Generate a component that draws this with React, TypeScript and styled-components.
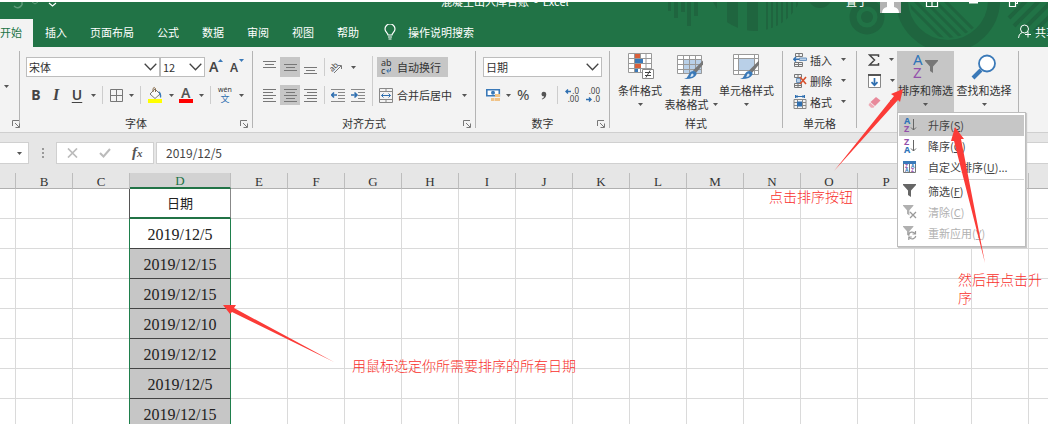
import React from 'react';
import styled, { createGlobalStyle, css } from 'styled-components';

const sans = '"Noto Sans CJK SC", "Noto Sans", sans-serif';
const serif = '"Liberation Serif", "Noto Sans CJK SC", serif';

const Global = createGlobalStyle`
  * { box-sizing: border-box; }
  html, body, #root { margin: 0; height: 100%; }
  body { overflow: hidden; background: #fff; font-family: ${sans}; font-size: 11px; color: #333; }
  button, input, select { font: inherit; color: inherit; margin: 0; padding: 0; border: 0; background: none; }
  button { white-space: nowrap; }
  svg { display: block; flex: none; }
`;

const Page = styled.div`
  position: relative;
  display: flex;
  flex-direction: column;
  height: 100vh;
  padding-top: 2px;
  overflow: hidden;
`;

/* ---------- title bar and tabs ---------- */

const Header = styled.header`
  position: relative;
  flex: none;
  overflow: hidden;
  background: #217346;
  color: #fff;
`;
const Banner = styled.svg`
  position: absolute;
  top: 0;
  right: 0;
`;
const TitleRow = styled.div`
  position: relative;
  display: flex;
  height: 17px;
  align-items: flex-start;
`;
const QuickAccess = styled.div`
  flex: 0 1 441px;
`;
const TitleText = styled.h1`
  margin: -9px 0 0;
  font-size: 11px;
  line-height: 16px;
  font-weight: 400;
  white-space: nowrap;
`;
const WindowTools = styled.div`
  display: flex;
  margin-left: auto;
  margin-right: 30px;
`;
const UserName = styled.span`
  width: 34px;
  margin-top: -9px;
  line-height: 16px;
`;
const TabRow = styled.nav`
  position: relative;
  display: flex;
  height: 28px;
  align-items: stretch;
  gap: 23px;
`;
const Tab = styled.button<{ $active?: boolean }>`
  padding-bottom: 2px;
  color: #fff;
  line-height: 24px;
  ${p => p.$active && css`
    width: 33px;
    margin-right: -11px;
    padding-right: 11px;
    background: #f3f3f3;
    color: #217346;
  `}
`;
const Tell = styled.button`
  display: flex;
  align-items: center;
  gap: 12px;
  margin-left: 2px;
  padding-bottom: 3px;
  color: #fff;
`;
const Share = styled(Tell)`
  gap: 4px;
  margin-left: auto;
  margin-right: -9px;
`;

/* ---------- ribbon ---------- */

const Ribbon = styled.div`
  position: relative;
  z-index: 2;
  display: flex;
  flex: none;
  padding: 4px 0;
  background: #f3f3f3;
  border-bottom: 1px solid #cfcfcf;
`;
const Group = styled.section<{ $w: number }>`
  display: flex;
  flex-direction: column;
  flex: none;
  width: ${p => p.$w}px;
  border-right: 1px solid #b4b4b4;
`;
const Body = styled.div<{ $left?: number }>`
  display: flex;
  height: 67px;
  padding-left: ${p => p.$left ?? 0}px;
`;
const Rows = styled.div`
  display: flex;
  flex-direction: column;
  gap: 8px;
  padding-top: 6px;
`;
const Row = styled.div`
  display: flex;
  height: 20px;
`;
const Footer = styled.footer`
  display: grid;
  grid-template-columns: 12px 1fr 12px;
  height: 10px;
  line-height: 10px;
  text-align: center;
`;
const Launcher = styled.button`
  grid-column: 3;
  align-self: end;
`;
const GroupName = styled.span`
  grid-column: 2;
`;
const Tool = styled.button<{ $w?: number; $on?: boolean }>`
  display: flex;
  align-items: center;
  justify-content: center;
  flex: none;
  width: ${p => p.$w ?? 20}px;
  height: 20px;
  background: ${p => (p.$on ? '#c6c6c6' : 'none')};
`;
const Letter = styled.span<{ $kind?: 'b' | 'i' | 'u' }>`
  font: 700 14px/20px "Noto Sans", sans-serif;
  color: #444;
  ${p => p.$kind === 'i' && css`font-family: "Liberation Serif", serif; font-style: italic; font-size: 16px;`}
  ${p => p.$kind === 'u' && css`font-weight: 600; text-decoration: underline; text-underline-offset: 2px;`}
`;
const CaretBox = styled.button`
  display: flex;
  align-items: center;
  justify-content: center;
  flex: none;
  width: 10px;
`;
const Rule = styled.span<{ $w?: number; $tall?: boolean }>`
  flex: none;
  width: ${p => p.$w ?? 8}px;
  height: ${p => (p.$tall ? 50 : 18)}px;
  margin-top: ${p => (p.$tall ? 5 : 1)}px;
  background: linear-gradient(#cdcdcd, #cdcdcd) center / 1px 100% no-repeat;
`;
const SelectBox = styled.label<{ $w: number }>`
  position: relative;
  width: ${p => p.$w}px;
  height: 20px;
  svg { position: absolute; right: 3px; top: 6px; pointer-events: none; }
  select {
    appearance: none;
    width: 100%;
    height: 20px;
    padding: 0 2px;
    border: 1px solid #bdbdbd;
    border-radius: 0;
    background: #fff;
    line-height: 18px;
  }
`;
const TextTool = styled.button<{ $on?: boolean }>`
  display: flex;
  align-items: center;
  gap: 4px;
  height: 20px;
  padding: 0 7px 0 2px;
  background: ${p => (p.$on ? '#c6c6c6' : 'none')};
`;
const BigTool = styled.button<{ $w: number; $on?: boolean }>`
  display: flex;
  flex-direction: column;
  align-items: center;
  flex: none;
  width: ${p => p.$w}px;
  height: 67px;
  line-height: 14px;
  background: ${p => (p.$on ? '#c6c6c6' : 'none')};
`;
const BigIcon = styled.span`
  display: flex;
  align-items: center;
  height: 32px;
`;
const SecondLine = styled.span`
  display: flex;
  align-items: center;
  justify-content: center;
  gap: 4px;
  height: 14px;
`;
const Stack = styled.div<{ $w?: number }>`
  display: flex;
  flex-direction: column;
  flex: none;
  width: ${p => (p.$w ? p.$w + 'px' : 'auto')};
  margin-top: -2px;
`;
const SmallTool = styled.button`
  display: flex;
  align-items: center;
  gap: 3px;
  height: 21px;
  svg:last-child { margin-left: 6px; }
`;
const Anchor = styled.div`
  position: relative;
`;

/* ---------- sort menu ---------- */

const Menu = styled.div`
  position: absolute;
  top: 61px;
  left: 0;
  width: 129px;
  padding: 2px 1px;
  background: #fff;
  border: 1px solid #bdbdbd;
  box-shadow: 1px 1px 1px #c8c8c8;
`;
const MenuItem = styled.button<{ $on?: boolean; $off?: boolean }>`
  display: flex;
  align-items: center;
  gap: 10px;
  width: 100%;
  height: 21px;
  padding: 0 0 1px 3px;
  background: ${p => (p.$on ? '#c6c6c6' : 'none')};
  color: ${p => (p.$off ? '#b1b1b1' : '#444')};
`;
const MenuRule = styled.hr`
  height: 1px;
  margin: 1px 0 1px 29px;
  border: 0;
  background: #d4d4d4;
`;

/* ---------- formula bar ---------- */

const FormulaRow = styled.div`
  display: flex;
  flex: none;
  padding: 9px 0;
  background: #e6e6e6;
`;
const NameBox = styled.button`
  display: flex;
  align-items: center;
  justify-content: flex-end;
  width: 29px;
  padding-right: 6px;
  background: #fff;
  border: 1px solid #d0d0d0;
  border-left: 0;
`;
const Dots = styled.span`
  display: flex;
  align-items: center;
  justify-content: center;
  width: 27px;
`;
const FxBox = styled.div`
  display: flex;
  align-items: center;
  justify-content: space-around;
  width: 98px;
  margin-right: 2px;
  background: #fff;
  border: 1px solid #d0d0d0;
`;
const Fx = styled.span`
  font: italic 700 15px/19px "Liberation Serif", serif;
  color: #555;
  small { font-size: 11px; }
`;
const FormulaInput = styled.input`
  flex: 1;
  min-width: 0;
  height: 22px;
  padding: 0 9px 2px;
  background: #fff;
  border: 1px solid #d0d0d0;
  border-right: 0;
  font-size: 12px;
  color: #444;
`;

/* ---------- sheet ---------- */

const Sheet = styled.main`
  flex: 1;
  min-height: 0;
  overflow: hidden;
`;
const Grid = styled.table`
  table-layout: fixed;
  width: 1086px;
  border-collapse: separate;
  border-spacing: 0;
  font-family: ${serif};
`;
const Head = styled.th<{ $on?: boolean }>`
  height: 16px;
  padding: 2px 0 0;
  background: ${p => (p.$on ? '#d2d2d2' : '#e6e6e6')};
  border-right: 1px solid #bdbdbd;
  border-bottom: ${p => (p.$on ? '2px solid #217346' : '1px solid #b0b0b0')};
  color: ${p => (p.$on ? '#217346' : '#333')};
  font-size: 13px;
  font-weight: 400;
  line-height: 12px;
`;
const Cell = styled.td<{ $kind?: 'title' | 'active' | 'picked' }>`
  height: 30px;
  padding: 2px 0 0;
  border-right: 1px solid #dadada;
  border-bottom: 1px solid #dadada;
  text-align: center;
  white-space: nowrap;
  font-size: 16px;
  line-height: 24px;
  color: #222;
  ${p => p.$kind === 'title' && css`
    font-size: 13px;
    border-right-color: #888;
    border-bottom: 2px solid #217346;
    box-shadow: -1px 0 #555;
  `}
  ${p => (p.$kind === 'active' || p.$kind === 'picked') && css`
    border-right: 1px solid #1f7f4c;
    border-bottom-color: #444;
    box-shadow: -1px 0 #1f7f4c;
  `}
  ${p => p.$kind === 'picked' && css`background: #c6c6c6;`}
`;

/* ---------- tutorial annotations ---------- */

const Arrows = styled.svg`
  position: absolute;
  top: 0;
  left: 0;
  z-index: 3;
  pointer-events: none;
`;
const Note = styled.p<{ $x: number; $y: number; $w?: number }>`
  position: absolute;
  z-index: 3;
  left: ${p => p.$x}px;
  top: ${p => p.$y}px;
  width: ${p => (p.$w ? p.$w + 'px' : 'max-content')};
  margin: 0;
  font-size: 14px;
  font-weight: 300;
  line-height: 18px;
  color: #f8302c;
`;

/* ---------- icons ---------- */

const Caret = () => (
  <svg width="5" height="3"><path d="M0 0h5L2.5 3z" fill="#555" /></svg>
);
const Chevron = () => (
  <svg width="13" height="8" fill="none" stroke="#444" strokeWidth="1.3"><path d="M.7.8l5.8 6 5.8-6" /></svg>
);
const LaunchIcon = () => (
  <svg width="8" height="8" fill="none" stroke="#777"><path d="M.5 6V.5H7M3 3l4 4M7.500 3.500v4h-4" /></svg>
);
const Lines = ({ rows, h = 14 }: { rows: [number, number, number][]; h?: number }) => (
  <svg width="13" height={h} stroke="#777">
    {rows.map(([x1, x2, y]) => <path key={y} d={`M${x1} ${y}.5H${x2}`} />)}
  </svg>
);
const full = (a: number, b: number): [number, number, number][] =>
  [1, 4, 7, 10, 13].map((y, i) => (i % 2 ? [a, b, y] : [0, 13, y]));

const GrowA = ({ up }: { up?: boolean }) => (
  <svg width="16" height="18">
    <text x="1" y="14" fontFamily="Noto Sans" fontWeight="600" fontSize={up ? 14 : 12} fill="#444">A</text>
    <path d={up ? 'M10 4l2.500-3L15 4z' : 'M10 1h5l-2.500 3z'} fill="#3a79b8" />
  </svg>
);
const BorderIcon = () => (
  <svg width="13" height="13" fill="none" stroke="#777"><path d="M.5.5h12v12H.5zM6.500.5v12M.5 6.500h12" /></svg>
);
const FillIcon = () => (
  <svg width="16" height="18">
    <path d="M3 8l5-5 5 5-5 4.500z" fill="#fafafa" stroke="#777" />
    <path d="M6 6V2.500q1-2 2.500 0V6" fill="none" stroke="#8a6d4a" />
    <path d="M11.500 5q3.500 1.500 2.500 7-1.500-1-1.500-4z" fill="#3a79b8" />
    <path d="M1 13h14v4H1z" fill="#ff0" />
  </svg>
);
const FontColorIcon = () => (
  <svg width="16" height="18">
    <text x="3" y="12" fontFamily="Noto Sans" fontWeight="600" fontSize="14" fill="#555">A</text>
    <path d="M1 13h14v4H1z" fill="red" />
  </svg>
);
const PhoneticIcon = () => (
  <svg width="18" height="20">
    <text x="9" y="7" textAnchor="middle" fontFamily="Noto Sans" fontSize="7" fill="#333">wén</text>
    <text x="9" y="17" textAnchor="middle" fontFamily="Noto Sans CJK SC" fontSize="9" fill="#2f6fb0">文</text>
  </svg>
);
const OrientIcon = () => (
  <svg width="16" height="14">
    <text x="0" y="9" fontFamily="Noto Sans" fontSize="8" fill="#444" transform="rotate(-45 5 8)">ab</text>
    <path d="M4 13l7-7M8 5.500h3.500V9" fill="none" stroke="#777" />
  </svg>
);
const IndentIcon = ({ inward }: { inward?: boolean }) => (
  <svg width="14" height="14" fill="none">
    <path d="M0 1.500h14M7 4.500h7M7 7.500h7M7 10.500h7M0 13.500h14" stroke="#888" />
    <path d={inward ? 'M0 7h6M3.500 4.500L6 7 3.500 9.500' : 'M6 7H1M3 4.500L.7 7 3 9.500'} stroke="#2f6fb0" strokeWidth="1.6" />
  </svg>
);
const WrapIcon = () => (
  <svg width="14" height="16">
    <text x="2" y="7" fontFamily="Noto Sans" fontSize="9" fill="#333">ab</text>
    <text x="2" y="15" fontFamily="Noto Sans" fontSize="9" fill="#333">c</text>
    <path d="M11.500 9v3H8M9.500 10.200L7.700 12l1.800 1.800" fill="none" stroke="#2f6fb0" />
  </svg>
);
const MergeIcon = () => (
  <svg width="14" height="15" fill="none" stroke="#888">
    <path d="M.5.5h13v14H.5zM.5 3.500h13M.5 11.500h13M7 .5v3M7 11.500v3" />
    <path d="M2.500 7.500h9M4.500 5.500l-2 2 2 2M9.500 5.500l2 2-2 2" stroke="#2f6fb0" />
  </svg>
);
const MoneyIcon = () => (
  <svg width="15" height="15">
    <path d="M.8 1.800h12.500v6H.8z" fill="#fff" stroke="#3a79b8" strokeWidth="1.600" />
    <circle cx="7" cy="4.800" r="2" fill="#3a79b8" />
    <path d="M9 6h5v3H9zM9 10h5v3H9zM5 10h3.500v3H5z" fill="#f0c388" />
  </svg>
);
const DecimalIcon = ({ less }: { less?: boolean }) => (
  <svg width="16" height="18" fontFamily="Noto Sans" fontSize="8" fill="#444">
    <text x="15" y="8" textAnchor="end">{less ? '.00' : '.0'}</text>
    <text x="15" y="16" textAnchor="end">{less ? '.0' : '.00'}</text>
    <path d={less ? 'M1 13.500h5M4 11.500l2 2-2 2' : 'M7 5.500H2M4 3.500l-2 2 2 2'} fill="none" stroke="#2f6fb0" strokeWidth="1.400" />
  </svg>
);
const CommaIcon = () => (
  <svg width="8" height="9"><path d="M1.500 3a2.300 2.300 0 1 1 4.800.3C6.200 6 4.500 8 2 8.500l-.2-.8C3.300 7.200 4 6.300 4 5.300 2.500 5.500 1.500 4.500 1.500 3z" fill="#555" /></svg>
);
const ConditionalIcon = () => (
  <svg width="28" height="28">
    <path d="M2.500.5h23v19h-23zM2.500 5.500h23M2.500 10.500h23M2.500 15.500h23M8.500.5v19M14.500.5v19M20 .5v19" fill="#fff" stroke="#999" />
    <path d="M9 1h5v4H9zM9 11h6v4H9z" fill="#d9603b" />
    <path d="M9 6h8v4H9zM9 16h3v3H9z" fill="#3a79b8" />
    <path d="M16.500 16.500h11v9h-11z" fill="#fff" stroke="#888" />
    <path d="M19 19.500h6M19 22.500h6M24 17.500l-4 7" stroke="#444" />
  </svg>
);
const Brush = () => (
  <>
    <path d="M26 6.500v4l-7 8.500-3-2.500z" fill="#777" />
    <path d="M16.500 17q3.500.5 3 3.500-2.500 5-12.500 4.500 3.500-1 4.500-4 1.500-4 5-4z" fill="#3a79b8" />
    <path d="M15 19.500q2 .2 1.500 2-1 1.500-3.500 1.500 1.200-1 .8-2z" fill="#d5e5f4" />
  </>
);
const TableStyleIcon = () => (
  <svg width="28" height="27">
    <path d="M.5 1.500h24v18H.5z" fill="#fff" />
    <path d="M7 6h18v14H7z" fill="#b9d0e8" />
    <path d="M.5 1.500h24v18H.5zM.5 5.500h24M.5 10.500h24M.5 15.500h24M6.500 1.500v18M12.500 1.500v18M18.500 1.500v18" fill="none" stroke="#999" />
    <Brush />
  </svg>
);
const CellStyleIcon = () => (
  <svg width="28" height="27">
    <path d="M.5.5h25v20H.5z" fill="#fff" />
    <path d="M6 5h15v11H6z" fill="#b9d0e8" />
    <path d="M.5.5h25v20H.5zM.5 4.500h25M.5 16.500h25M5.500.5v20M21.500.5v20" fill="none" stroke="#999" />
    <Brush />
  </svg>
);
const InsertIcon = () => (
  <svg width="14" height="14" fill="none" stroke="#777">
    <path d="M2.500.5h7v3h-7zM6 .5v3M1.500 9.500h8v4h-8zM5.500 9.500v4M1.500 11.500h8" />
    <path d="M6.500 5h7v2.500h-7z" fill="#b9d0e8" stroke="#6b93bd" />
    <path d="M6 6.300H1M3 4L.7 6.300 3 8.500" stroke="#2f6fb0" strokeWidth="1.400" />
  </svg>
);
const DeleteIcon = () => (
  <svg width="14" height="14" fill="none" stroke="#777">
    <path d="M1.500.5h7v3h-7zM5 .5v3M1.500 9.500h7v4h-7zM5 9.500v4M1.500 11.500h7" />
    <path d="M3.500 4.500h4v4h-4z" fill="#b9d0e8" stroke="#6b93bd" />
    <path d="M7 3l6 7M13 3l-6 7" stroke="#d8502c" strokeWidth="1.600" />
  </svg>
);
const FormatIcon = () => (
  <svg width="14" height="14" fill="none" stroke="#888">
    <path d="M1 4.500h12v9H1zM1 7.500h12M1 10.500h12M4.500 4.500v9M9.500 4.500v9" />
    <path d="M4 6.500h5v5H4z" fill="#2f6fb0" stroke="none" />
    <path d="M2 1.500h9M2.500 0v3M11.500 0v3M4.500 0L3 1.500 4.500 3M9.500 0L11 1.500 9.500 3" stroke="#2f6fb0" />
  </svg>
);
const SumIcon = () => (
  <svg width="12" height="12" fill="none" stroke="#444" strokeWidth="1.500"><path d="M10.500 3V1H1.500l5 5-5 5h9V9" /></svg>
);
const DownIcon = () => (
  <svg width="13" height="14" fill="none">
    <path d="M.5 1.500h12v12H.5z" fill="#fff" stroke="#888" /><path d="M0 1h13" stroke="#555" strokeWidth="2" />
    <path d="M6.500 4v7M3.500 8.200l3 3 3-3" stroke="#2f6fb0" strokeWidth="1.700" />
  </svg>
);
const EraserIcon = () => (
  <svg width="13" height="12">
    <path d="M8 1l4.500 3.500L7 10 2.500 6z" fill="#e8899a" /><path d="M2 6.500l4.500 4-1 1.200H3L.5 9z" fill="#efa9b5" />
  </svg>
);
const Funnel = ({ color = '#666' }: { color?: string }) => (
  <path d="M0 0h13v1L8 6.500V13l-3-2V6.500L0 1z" fill={color} />
);
const SortFilterIcon = () => (
  <svg width="28" height="26" fontFamily="Noto Sans" fontSize="15">
    <text x="1" y="11" fill="#2f74b8">A</text>
    <text x="1" y="24" fill="#9350ab">Z</text>
    <g transform="translate(13 6)"><Funnel color="#777" /></g>
  </svg>
);
const FindIcon = () => (
  <svg width="26" height="26" fill="none">
    <path d="M10 16l-8 8" stroke="#3a79b8" strokeWidth="4" />
    <circle cx="16" cy="9.500" r="8" fill="#fff" stroke="#3a79b8" strokeWidth="1.800" />
  </svg>
);
const SortIcon = ({ desc }: { desc?: boolean }) => (
  <svg width="16" height="16" fontFamily="Noto Sans" fontWeight="700" fontSize="9">
    <text x="2" y="7" fill={desc ? '#9350ab' : '#2f74b8'}>{desc ? 'Z' : 'A'}</text>
    <text x="2" y="15" fill={desc ? '#2f74b8' : '#9350ab'}>{desc ? 'A' : 'Z'}</text>
    <path d="M11.500 2v11M9 10.500l2.500 2.500 2.500-2.500" fill="none" stroke="#666" />
  </svg>
);
const CustomSortIcon = () => (
  <svg width="16" height="14" fontFamily="Noto Sans" fontWeight="700" fontSize="5">
    <path d="M1.500 1.500h12v11h-12zM7.500 3v10" fill="#fff" stroke="#777" />
    <path d="M1 1h13v3H1z" fill="#3a79b8" />
    <text x="3" y="8" fill="#9350ab">Z</text><text x="3" y="12" fill="#2f74b8">A</text>
    <text x="9" y="8" fill="#2f74b8">A</text><text x="9" y="12" fill="#9350ab">Z</text>
  </svg>
);
const FilterIcon = () => (
  <svg width="16" height="14"><g transform="translate(1 0)"><Funnel /></g></svg>
);
const ClearIcon = () => (
  <svg width="16" height="14"><g transform="translate(1 0) scale(.8)"><Funnel color="#b0b0b0" /></g>
    <path d="M8 7l6 6M14 7l-6 6" stroke="#999" strokeWidth="1.300" /></svg>
);
const ReapplyIcon = () => (
  <svg width="16" height="14"><g transform="translate(1 0) scale(.8)"><Funnel color="#b0b0b0" /></g>
    <g fill="none" stroke="#999" strokeWidth="1.200">
      <path d="M6.500 9a3.700 3.700 0 0 1 6.500-1.500M13.500 5v3h-3M13.800 10a3.700 3.700 0 0 1-6.500 1.500M6.800 14v-3h3" />
    </g></svg>
);
const BulbIcon = () => (
  <svg width="12" height="16" fill="none" stroke="#fff" strokeWidth="1.200">
    <path d="M4 11c0-2-3-3-3-6a5 5 0 0 1 10 0c0 3-3 4-3 6zM4 13h4M4.500 15h3" />
  </svg>
);
const PersonIcon = () => (
  <svg width="13" height="15" fill="none" stroke="#fff">
    <circle cx="6.500" cy="5" r="4" /><path d="M.5 14q0-4 3.500-5.500M10 7.500v6M7 10.500h6" />
  </svg>
);
const BannerArt = () => (
  <Banner width="400" height="45" viewBox="648 2 400 45" fill="#1f653f">
    <defs>
      <clipPath id="disc"><circle cx="755" cy="-17" r="48" /></clipPath>
      <clipPath id="ring"><circle cx="948" cy="0" r="38" /></clipPath>
    </defs>
    <path d="M668 0h3v11h-3zM674 0h4v18h-4zM681 0h4v12h-4zM687 0h4v26h-4zM694 0h4v16h-4zM712 0h5v9z" />
    <g clipPath="url(#disc)">
      <path d="M727 0h11v40h-11zM747 0h11v40h-11zM766 0h2v40h-2zM771 0h2v40h-2zM776 0h2v40h-2zM781 0h2v40h-2zM786 0h2v40h-2zM791 0h2v40h-2zM796 0h2v40h-2z" />
    </g>
    <circle cx="820" cy="-4" r="12" />
    <circle cx="867" cy="17" r="6" />
    <g fill="none" stroke="#1f653f">
      <circle cx="867" cy="17" r="14" strokeWidth="7" />
      <circle cx="948" cy="0" r="46" strokeWidth="12" />
      <path clipPath="url(#ring)" d="M904 0l44 44M914 0l44 44M924 0l44 44M934 0l44 44M944 0l44 44" strokeWidth="3" />
      <path d="M1009 18l18-18M1014 26l26-26M1022 31l31-31M1034 32l20-20" strokeWidth="4" />
    </g>
  </Banner>
);

/* ---------- parts ---------- */

const Drop = ({ label }: { label: string }) => <CaretBox aria-label={label}><Caret /></CaretBox>;

const Picker = ({ w, label, value }: { w: number; label: string; value: string }) => (
  <SelectBox $w={w}>
    <select aria-label={label} defaultValue={value}><option>{value}</option></select>
    <Chevron />
  </SelectBox>
);

const GroupFoot = ({ name, launch }: { name?: string; launch?: boolean }) => (
  <Footer>
    {name && <GroupName>{name}</GroupName>}
    {launch && <Launcher aria-label="更多设置"><LaunchIcon /></Launcher>}
  </Footer>
);

const menu = [
  { text: '升序', key: 'S', icon: <SortIcon />, on: true },
  { text: '降序', key: 'O', icon: <SortIcon desc /> },
  { text: '自定义排序', key: 'U', tail: '...', icon: <CustomSortIcon />, rule: true },
  { text: '筛选', key: 'F', icon: <FilterIcon /> },
  { text: '清除', key: 'C', icon: <ClearIcon />, off: true },
  { text: '重新应用', key: 'Y', icon: <ReapplyIcon />, off: true },
];

const tabs = ['插入', '页面布局', '公式', '数据', '审阅', '视图', '帮助'];
const columns = ['', ...'BCDEFGHIJKLMNOPQRS'];
const dates = ['日期', '2019/12/5', '2019/12/15', '2019/12/15', '2019/12/10', '2019/12/12', '2019/12/5', '2019/12/15'];

const cellKind = (row: number) => (row === 0 ? 'title' : row === 1 ? 'active' : 'picked');

export default function App() {
  return (
    <Page>
      <Global />
      <Header>
        <BannerArt />
        <TitleRow>
          <QuickAccess>
            <svg width="64" height="8" fill="none" stroke="#5f9c7b" strokeWidth="1.500">
              <path d="M14 4q4 4 8-1M22 0v3" /><path d="M32 0l3 2 3-2" strokeWidth="1" />
              <path d="M49 1l3.500 3L56 1" stroke="#fff" strokeWidth="1.200" />
            </svg>
          </QuickAccess>
          <TitleText>混凝土出入库台账 &nbsp;-&nbsp; Excel</TitleText>
          <WindowTools>
            <UserName>置丁</UserName>
            <svg width="138" height="12" fill="none" stroke="#fff">
              <path d="M0 0h21v11H0z" fill="#b3b3b3" stroke="none" />
              <path d="M2 11q0-5 5-6V0h7v5q5 1 5 6z" fill="#fff" stroke="none" />
              <path d="M46.500 0v4.500h11V0M52 0v4" strokeWidth="1.200" />
              <path d="M89 .5h9" strokeWidth="2" />
              <path d="M129.500 0v4.500h6V0M135.500 1.500h2V0" strokeWidth="1.200" />
            </svg>
          </WindowTools>
        </TitleRow>
        <TabRow>
          <Tab $active>开始</Tab>
          {tabs.map(t => <Tab key={t}>{t}</Tab>)}
          <Tell><BulbIcon />操作说明搜索</Tell>
          <Share><PersonIcon />共享</Share>
        </TabRow>
      </Header>

      <Ribbon>
        <Group $w={20}>
          <Body $left={1}><Rows><Row /><Drop label="粘贴选项" /></Rows></Body>
          <GroupFoot launch />
        </Group>

        <Group $w={233}>
          <Body $left={6}>
            <Rows>
              <Row>
                <Picker w={134} label="字体" value="宋体" />
                <Picker w={45} label="字号" value="12" />
                <Tool $w={22} aria-label="增大字号"><GrowA up /></Tool>
                <Tool aria-label="减小字号"><GrowA /></Tool>
              </Row>
              <Row>
                <Tool><Letter>B</Letter></Tool>
                <Tool><Letter $kind="i">I</Letter></Tool>
                <Tool $w={22}><Letter $kind="u">U</Letter></Tool>
                <Drop label="下划线选项" />
                <Rule />
                <Tool aria-label="边框"><BorderIcon /></Tool>
                <Drop label="边框选项" />
                <Rule />
                <Tool $w={22} aria-label="填充颜色"><FillIcon /></Tool>
                <Drop label="填充颜色选项" />
                <Tool aria-label="字体颜色"><FontColorIcon /></Tool>
                <Drop label="字体颜色选项" />
                <Rule />
                <Tool $w={22} aria-label="拼音"><PhoneticIcon /></Tool>
                <Drop label="拼音选项" />
              </Row>
            </Rows>
          </Body>
          <GroupFoot name="字体" launch />
        </Group>

        <Group $w={223}>
          <Body $left={6}>
            <Rows>
              <Row>
                <Tool $w={21} aria-label="顶端对齐"><Lines rows={[[0, 13, 1], [2, 11, 4], [0, 13, 7]]} /></Tool>
                <Tool $on aria-label="垂直居中"><Lines rows={[[0, 13, 4], [2, 11, 7], [0, 13, 10]]} /></Tool>
                <Tool aria-label="底端对齐"><Lines rows={[[0, 13, 7], [2, 11, 10], [0, 13, 13]]} /></Tool>
                <Rule />
                <Tool aria-label="方向"><OrientIcon /></Tool>
                <Drop label="方向选项" />
              </Row>
              <Row>
                <Tool $w={21} aria-label="左对齐"><Lines rows={full(0, 10)} h={15} /></Tool>
                <Tool $on aria-label="居中"><Lines rows={full(2, 11)} h={15} /></Tool>
                <Tool aria-label="右对齐"><Lines rows={full(3, 13)} h={15} /></Tool>
                <Rule />
                <Tool aria-label="减少缩进量"><IndentIcon /></Tool>
                <Tool aria-label="增加缩进量"><IndentIcon inward /></Tool>
              </Row>
            </Rows>
            <Rule $w={9} $tall />
            <Rows>
              <Row><TextTool $on><WrapIcon />自动换行</TextTool></Row>
              <Row>
                <TextTool><MergeIcon />合并后居中</TextTool>
                <Drop label="合并选项" />
              </Row>
            </Rows>
          </Body>
          <GroupFoot name="对齐方式" launch />
        </Group>

        <Group $w={134}>
          <Body $left={7}>
            <Rows>
              <Row><Picker w={119} label="数字格式" value="日期" /></Row>
              <Row>
                <Tool aria-label="会计数字格式"><MoneyIcon /></Tool>
                <Drop label="货币选项" />
                <Tool $w={22}><svg width="14" height="14"><text x="0" y="12" fontFamily="Noto Sans" fontSize="15" fill="#444">%</text></svg></Tool>
                <Tool $w={18} aria-label="千位分隔样式"><CommaIcon /></Tool>
                <Rule />
                <Tool $w={22} aria-label="增加小数位数"><DecimalIcon /></Tool>
                <Tool aria-label="减少小数位数"><DecimalIcon less /></Tool>
              </Row>
            </Rows>
          </Body>
          <GroupFoot name="数字" launch />
        </Group>

        <Group $w={173}>
          <Body $left={4}>
            <BigTool $w={52}><BigIcon><ConditionalIcon /></BigIcon>条件格式<SecondLine><Caret /></SecondLine></BigTool>
            <BigTool $w={50}><BigIcon><TableStyleIcon /></BigIcon>套用<SecondLine>表格格式<Caret /></SecondLine></BigTool>
            <BigTool $w={61}><BigIcon><CellStyleIcon /></BigIcon>单元格样式<SecondLine><Caret /></SecondLine></BigTool>
          </Body>
          <GroupFoot name="样式" />
        </Group>

        <Group $w={74}>
          <Body $left={10}>
            <Stack>
              <SmallTool><InsertIcon />插入<Caret /></SmallTool>
              <SmallTool><DeleteIcon />删除<Caret /></SmallTool>
              <SmallTool><FormatIcon />格式<Caret /></SmallTool>
            </Stack>
          </Body>
          <GroupFoot name="单元格" />
        </Group>

        <Group $w={162}>
          <Body $left={11}>
            <Stack $w={29}>
              <SmallTool aria-label="自动求和"><SumIcon /><Caret /></SmallTool>
              <SmallTool aria-label="填充"><DownIcon /><Caret /></SmallTool>
              <SmallTool aria-label="清除"><EraserIcon /><Caret /></SmallTool>
            </Stack>
            <Anchor>
              <BigTool $w={57} $on><BigIcon><SortFilterIcon /></BigIcon>排序和筛选<SecondLine><Caret /></SecondLine></BigTool>
              <Menu>
                {menu.map(m => (
                  <React.Fragment key={m.key}>
                    <MenuItem $on={m.on} $off={m.off}>
                      {m.icon}<span>{m.text}(<u>{m.key}</u>){m.tail}</span>
                    </MenuItem>
                    {m.rule && <MenuRule />}
                  </React.Fragment>
                ))}
              </Menu>
            </Anchor>
            <BigTool $w={60}><BigIcon><FindIcon /></BigIcon>查找和选择<SecondLine><Caret /></SecondLine></BigTool>
          </Body>
          <GroupFoot />
        </Group>
      </Ribbon>

      <FormulaRow>
        <NameBox aria-label="名称框"><Caret /></NameBox>
        <Dots><svg width="2" height="10" fill="#999"><path d="M0 0h2v2H0zM0 4h2v2H0zM0 8h2v2H0z" /></svg></Dots>
        <FxBox>
          <button aria-label="取消"><svg width="11" height="10" stroke="#bbb" strokeWidth="1.700"><path d="M1 .5l9 9M10 .5l-9 9" /></svg></button>
          <button aria-label="输入"><svg width="12" height="10" fill="none" stroke="#bbb" strokeWidth="2"><path d="M1 5l3.500 3.500L11 1" /></svg></button>
          <button aria-label="插入函数"><Fx>f<small>x</small></Fx></button>
        </FxBox>
        <FormulaInput aria-label="编辑栏" defaultValue="2019/12/5" />
      </FormulaRow>

      <Sheet>
        <Grid>
          <colgroup>
            {columns.map((c, i) => <col key={i} width={c === '' ? 16 : c === 'D' ? 101 : 57} />)}
          </colgroup>
          <thead>
            <tr>{columns.map((c, i) => <Head key={i} $on={c === 'D'}>{c}</Head>)}</tr>
          </thead>
          <tbody>
            {dates.map((d, r) => (
              <tr key={r}>
                {columns.map((c, i) => (c === 'D' ? <Cell key={i} $kind={cellKind(r)}>{d}</Cell> : <Cell key={i} />))}
              </tr>
            ))}
          </tbody>
        </Grid>
      </Sheet>

      <Arrows width="1048" height="424" fill="#fb3b37">
        <path d="M903 89l-3 13-2-2-64 71 60-75-3-2z" />
        <path d="M955 127l9 12-3 0 24 124-31-122-3 0z" />
        <path d="M223 305h13l-2 3 100 54-102-50-2 2z" />
      </Arrows>
      <Note $x={769} $y={187}>点击排序按钮</Note>
      <Note $x={958} $y={270} $w={88}>然后再点击升序</Note>
      <Note $x={352} $y={356}>用鼠标选定你所需要排序的所有日期</Note>
    </Page>
  );
}
